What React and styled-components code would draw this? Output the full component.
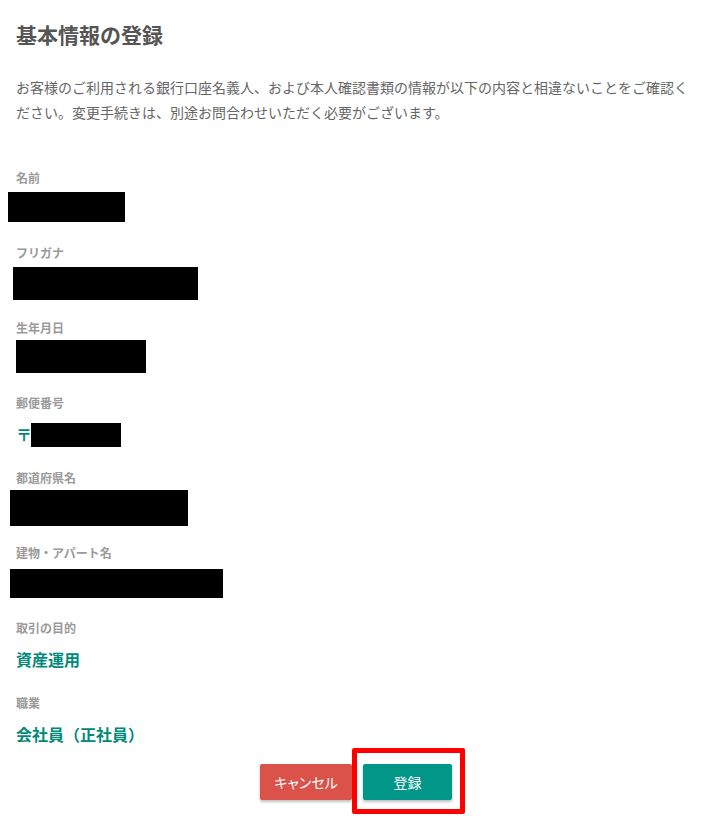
import React from 'react';
import styled, { createGlobalStyle } from 'styled-components';

const GlobalStyle = createGlobalStyle`
  body {
    margin: 0;
    background: #fff;
    font-family: "Noto Sans CJK JP", "Noto Sans", sans-serif;
  }
`;

const Page = styled.main`
  padding: 20px 24px 40px 16px;
`;

const Title = styled.h1`
  margin: 0;
  font-size: 21px;
  line-height: 28px;
  font-weight: bold;
  color: #555;
`;

const Lead = styled.p`
  margin: 27px 0 0;
  font-size: 14px;
  line-height: 25px;
  color: #666;
`;

const Fields = styled.dl`
  margin: 44px 0 0;
`;

const Field = styled.div`
  margin-bottom: 23px;
  &:last-child {
    margin-bottom: 0;
  }
`;

const Label = styled.dt`
  font-size: 12px;
  line-height: 18px;
  font-weight: bold;
  color: #9a9a9a;
`;

const Value = styled.dd`
  position: relative;
  margin: 10px 0 0;
  height: 24px;
  font-size: 16px;
  line-height: 24px;
  font-weight: bold;
  color: #00897b;
`;

const Redacted = styled.span`
  position: absolute;
  left: ${p => p.$x}px;
  top: ${p => p.$y}px;
  width: ${p => p.$w}px;
  height: ${p => p.$h}px;
  background: #000;
`;

const Actions = styled.div`
  display: flex;
  justify-content: center;
  gap: 11px;
  margin-top: 18px;
`;

const Button = styled.button`
  height: 36px;
  width: ${p => p.$width}px;
  border: none;
  border-radius: 2px;
  background: ${p => (p.$danger ? '#db524b' : '#009688')};
  color: #fff;
  font-family: "Noto Sans CJK JP", sans-serif;
  font-size: 14px;
  font-feature-settings: "palt";
  box-shadow: 0 2px 3px rgba(0, 0, 0, 0.25);
  cursor: pointer;
`;

const Highlight = styled.span`
  position: relative;
  display: inline-flex;
  &::after {
    content: "";
    position: absolute;
    left: -11px;
    right: -13px;
    top: -16px;
    bottom: -14px;
    border: 5px solid #ff0000;
    border-radius: 2px;
    pointer-events: none;
  }
`;

const fields = [
  { label: '名前', box: { x: -8, y: -5, w: 117, h: 30 } },
  { label: 'フリガナ', box: { x: -3, y: -5, w: 185, h: 33 } },
  { label: '生年月日', box: { x: 0, y: -7, w: 130, h: 33 } },
  { label: '郵便番号', text: '〒', box: { x: 15, y: 1, w: 90, h: 24 } },
  { label: '都道府県名', box: { x: -6, y: -7, w: 178, h: 36 } },
  { label: '建物・アパート名', box: { x: -6, y: -3, w: 213, h: 29 } },
  { label: '取引の目的', text: '資産運用' },
  { label: '職業', text: '会社員（正社員）' },
];

export default function App() {
  return (
    <Page>
      <GlobalStyle />
      <Title>基本情報の登録</Title>
      <Lead>
        お客様のご利用される銀行口座名義人、および本人確認書類の情報が以下の内容と相違ないことをご確認ください。変更手続きは、別途お問合わせいただく必要がございます。
      </Lead>
      <Fields>
        {fields.map((f, i) => (
          <Field key={i}>
            <Label>{f.label}</Label>
            <Value>
              {f.text}
              {f.box && <Redacted $x={f.box.x} $y={f.box.y} $w={f.box.w} $h={f.box.h} />}
            </Value>
          </Field>
        ))}
      </Fields>
      <Actions>
        <Button $danger $width={92}>キャンセル</Button>
        <Highlight>
          <Button $width={89}>登録</Button>
        </Highlight>
      </Actions>
    </Page>
  );
}
